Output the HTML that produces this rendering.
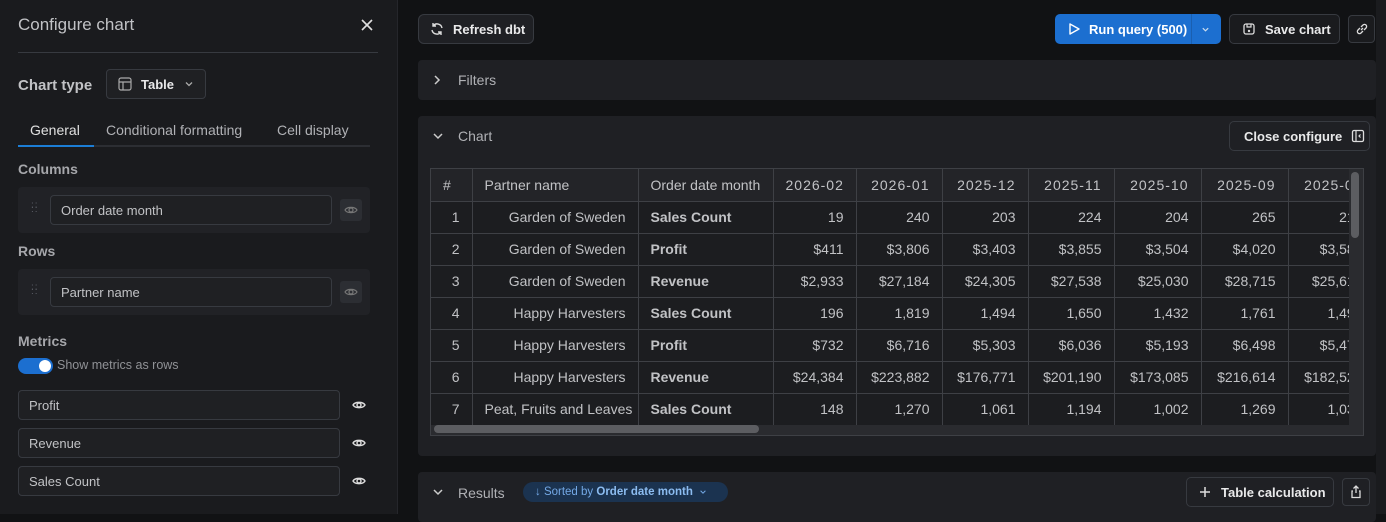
<!DOCTYPE html>
<html><head><meta charset="utf-8"><style>
*{box-sizing:border-box;margin:0;padding:0}
body{width:1386px;height:514px;overflow:hidden;background:#111214;font-family:"Liberation Sans",sans-serif;color:#c1c2c5;position:relative}
.a{position:absolute}
.lp{left:0;top:0;width:398px;height:514px;background:#1a1b1e;border-right:1px solid #25262b}
.lbl{font-size:14px;font-weight:bold;color:#a6a7ab}
.inp{background:#1f2023;border:1px solid #373a40;border-radius:4px;font-size:13px;color:#c1c2c5;padding-left:10px;display:flex;align-items:center}
.btn{border:1px solid #373a40;border-radius:4px;background:#1f2023;color:#e9e9ea;font-size:13px;font-weight:bold;display:flex;align-items:center}
.card{background:#1f2024;border-radius:4px}
table{border-collapse:collapse;font-size:14px;color:#c1c2c5}
td,th{border:1px solid #3e4045;height:32px;padding:0 12px;white-space:nowrap;overflow:hidden}
th{background:#232428;font-weight:normal;text-align:left;color:#c1c2c5}
td{background:#1c1d20;text-align:right}
th.d{text-align:right;letter-spacing:1px}
td.m{text-align:left;font-weight:bold}
svg{display:block}
</style></head><body>
<div class="a lp">
 <div class="a" style="left:18px;top:15px;font-size:17px;color:#c1c2c5">Configure chart</div>
 <svg class="a" style="left:360px;top:18px" width="14" height="14" viewBox="0 0 14 14"><path d="M2 2L12 12M12 2L2 12" stroke="#e0e0e0" stroke-width="1.6"/></svg>
 <div class="a" style="left:18px;top:52px;width:360px;height:1px;background:#373a40"></div>
 <div class="a" style="left:18px;top:77px;font-size:15px;color:#c1c2c5;font-weight:600">Chart type</div>
 <div class="a btn" style="left:106px;top:69px;width:100px;height:30px;background:#1f2023">
  <svg style="margin-left:11px" width="14" height="14" viewBox="0 0 14 14"><rect x="1" y="1" width="12" height="12" rx="2" fill="none" stroke="#aaa" stroke-width="1.2"/><path d="M1 5H13M5 5V13" stroke="#aaa" stroke-width="1.2"/></svg>
  <span style="margin-left:9px">Table</span>
  <svg style="margin-left:10px" width="10" height="10" viewBox="0 0 10 10"><path d="M2 3.5L5 6.5L8 3.5" fill="none" stroke="#aaa" stroke-width="1.3"/></svg>
 </div>
 <div class="a" style="left:30px;top:122px;font-size:14px;color:#e0e0e0">General</div>
 <div class="a" style="left:106px;top:122px;font-size:14px;color:#b0b1b5">Conditional formatting</div>
 <div class="a" style="left:277px;top:122px;font-size:14px;color:#b0b1b5">Cell display</div>
 <div class="a" style="left:18px;top:145px;width:352px;height:2px;background:#2c2e33"></div>
 <div class="a" style="left:18px;top:145px;width:76px;height:2px;background:#1c7ed6"></div>
 <div class="a lbl" style="left:18px;top:161px">Columns</div>
 <div class="a" style="left:18px;top:187px;width:352px;height:46px;background:#212226;border-radius:4px"></div>
 <div class="a" style="left:31px;top:204px;color:#5c5f66;font-size:10px;line-height:4px;letter-spacing:1px">::<br>::<br></div>
 <div class="a inp" style="left:50px;top:195px;width:282px;height:30px">Order date month</div>
 <div class="a" style="left:340px;top:199px;width:22px;height:22px;background:#2c2e33;border-radius:3px"></div>
 <svg class="a" style="left:344px;top:203px" width="14" height="14" viewBox="0 0 14 14"><path d="M1 7C3 3.5 11 3.5 13 7C11 10.5 3 10.5 1 7Z" fill="none" stroke="#777" stroke-width="1.2"/><circle cx="7" cy="7" r="2" fill="none" stroke="#777" stroke-width="1.2"/></svg>
 <div class="a lbl" style="left:18px;top:243px">Rows</div>
 <div class="a" style="left:18px;top:269px;width:352px;height:46px;background:#212226;border-radius:4px"></div>
 <div class="a" style="left:31px;top:286px;color:#5c5f66;font-size:10px;line-height:4px;letter-spacing:1px">::<br>::<br></div>
 <div class="a inp" style="left:50px;top:277px;width:282px;height:30px">Partner name</div>
 <div class="a" style="left:340px;top:281px;width:22px;height:22px;background:#2c2e33;border-radius:3px"></div>
 <svg class="a" style="left:344px;top:285px" width="14" height="14" viewBox="0 0 14 14"><path d="M1 7C3 3.5 11 3.5 13 7C11 10.5 3 10.5 1 7Z" fill="none" stroke="#777" stroke-width="1.2"/><circle cx="7" cy="7" r="2" fill="none" stroke="#777" stroke-width="1.2"/></svg>
 <div class="a lbl" style="left:18px;top:333px">Metrics</div>
 <div class="a" style="left:18px;top:358px;width:35px;height:16px;background:#1c6fd0;border-radius:8px"></div>
 <div class="a" style="left:39px;top:360px;width:12px;height:12px;background:#fff;border-radius:6px"></div>
 <div class="a" style="left:57px;top:358px;font-size:12.5px;color:#909296">Show metrics as rows</div>
 <div class="a inp" style="left:18px;top:390px;width:322px;height:30px">Profit</div>
 <div class="a inp" style="left:18px;top:428px;width:322px;height:30px">Revenue</div>
 <div class="a inp" style="left:18px;top:466px;width:322px;height:30px">Sales Count</div>
 <svg class="a" style="left:352px;top:398px" width="14" height="14" viewBox="0 0 14 14"><path d="M1 7C3 3.5 11 3.5 13 7C11 10.5 3 10.5 1 7Z" fill="none" stroke="#ddd" stroke-width="1.4"/><circle cx="7" cy="7" r="2" fill="none" stroke="#ddd" stroke-width="1.4"/></svg>
 <svg class="a" style="left:352px;top:436px" width="14" height="14" viewBox="0 0 14 14"><path d="M1 7C3 3.5 11 3.5 13 7C11 10.5 3 10.5 1 7Z" fill="none" stroke="#ddd" stroke-width="1.4"/><circle cx="7" cy="7" r="2" fill="none" stroke="#ddd" stroke-width="1.4"/></svg>
 <svg class="a" style="left:352px;top:474px" width="14" height="14" viewBox="0 0 14 14"><path d="M1 7C3 3.5 11 3.5 13 7C11 10.5 3 10.5 1 7Z" fill="none" stroke="#ddd" stroke-width="1.4"/><circle cx="7" cy="7" r="2" fill="none" stroke="#ddd" stroke-width="1.4"/></svg>
</div>

<div class="a btn" style="left:418px;top:14px;width:116px;height:30px;border-radius:6px;background:#1f2024">
 <svg style="margin-left:11px" width="14" height="14" viewBox="0 0 14 14"><path d="M12 6A5 5 0 0 0 3 4M2 8A5 5 0 0 0 11 10M3 1V4H6M11 13V10H8" fill="none" stroke="#ddd" stroke-width="1.4"/></svg>
 <span style="margin-left:9px">Refresh dbt</span>
</div>
<div class="a" style="left:1055px;top:14px;width:166px;height:30px;background:#1c6fd0;border-radius:5px;color:#fff;font-size:13px;font-weight:bold;display:flex;align-items:center">
 <svg style="margin-left:12px" width="14" height="14" viewBox="0 0 14 14"><path d="M3 2L12 7L3 12Z" fill="none" stroke="#fff" stroke-width="1.4" stroke-linejoin="round"/></svg>
 <span style="margin-left:8px">Run query (500)</span>
 <div style="position:absolute;left:136px;top:0;width:1px;height:30px;background:#1a5fb0"></div>
 <svg style="position:absolute;left:146px;top:11px" width="9" height="9" viewBox="0 0 10 10"><path d="M2 3.5L5 6.5L8 3.5" fill="none" stroke="#cde" stroke-width="1.3"/></svg>
</div>
<div class="a btn" style="left:1229px;top:14px;width:111px;height:30px;border-radius:5px;background:#1a1b1e">
 <svg style="margin-left:12px" width="14" height="14" viewBox="0 0 14 14"><rect x="2" y="2" width="10" height="10" rx="2" fill="none" stroke="#ddd" stroke-width="1.3"/><path d="M5 2V5H9V2" fill="none" stroke="#ddd" stroke-width="1.2"/><circle cx="7" cy="9" r="1.2" fill="#ddd"/></svg>
 <span style="margin-left:9px">Save chart</span>
</div>
<div class="a btn" style="left:1348px;top:15px;width:27px;height:28px;background:#1a1b1e;justify-content:center">
 <svg width="14" height="14" viewBox="0 0 14 14"><path d="M6 8L8 6M5 6L3 8A2 2 0 0 0 6 11L8 9M9 8L11 6A2 2 0 0 0 8 3L6 5" fill="none" stroke="#ddd" stroke-width="1.3"/></svg>
</div>
<div class="a" style="left:1376px;top:0;width:10px;height:514px;background:#1a1b1e"></div>

<div class="a card" style="left:418px;top:60px;width:958px;height:40px"></div>
<svg class="a" style="left:432px;top:74px" width="10" height="12" viewBox="0 0 10 12"><path d="M3 2L7 6L3 10" fill="none" stroke="#ccc" stroke-width="1.5"/></svg>
<div class="a" style="left:458px;top:72px;font-size:14px;color:#b0b1b5">Filters</div>

<div class="a card" style="left:418px;top:116px;width:958px;height:340px"></div>
<svg class="a" style="left:432px;top:131px" width="12" height="10" viewBox="0 0 12 10"><path d="M2 3L6 7L10 3" fill="none" stroke="#ccc" stroke-width="1.5"/></svg>
<div class="a" style="left:458px;top:128px;font-size:14px;color:#b0b1b5">Chart</div>
<div class="a btn" style="left:1229px;top:121px;width:141px;height:30px;border-radius:5px;background:#1f2024">
 <span style="margin-left:14px">Close configure</span>
 <svg style="margin-left:9px" width="14" height="14" viewBox="0 0 14 14"><rect x="1.5" y="1.5" width="11" height="11" rx="1.5" fill="none" stroke="#ddd" stroke-width="1.3"/><path d="M5 1.5V12.5M9.5 5.5L8 7L9.5 8.5" fill="none" stroke="#ddd" stroke-width="1.2"/></svg>
</div>
<div class="a" style="left:430px;top:168px;width:934px;height:268px;border:1px solid #3e4045;overflow:hidden;background:#2a2b2f">
 <div style="width:918px;height:256px;overflow:hidden">
 <table style="table-layout:fixed;width:944px">
  <colgroup><col style="width:41px"><col style="width:166px"><col style="width:135px"><col style="width:83px"><col style="width:86px"><col style="width:86px"><col style="width:86px"><col style="width:87px"><col style="width:87px"><col style="width:87px"></colgroup>
  <tr><th style="border-left:none;border-top:none">#</th><th style="border-top:none">Partner name</th><th style="border-top:none">Order date month</th><th class="d" style="border-top:none">2026-02</th><th class="d" style="border-top:none">2026-01</th><th class="d" style="border-top:none">2025-12</th><th class="d" style="border-top:none">2025-11</th><th class="d" style="border-top:none">2025-10</th><th class="d" style="border-top:none">2025-09</th><th class="d" style="border-top:none">2025-08</th></tr>
  <tr><td style="border-left:none">1</td><td>Garden of Sweden</td><td class="m">Sales Count</td><td>19</td><td>240</td><td>203</td><td>224</td><td>204</td><td>265</td><td>213</td></tr>
  <tr><td style="border-left:none">2</td><td>Garden of Sweden</td><td class="m">Profit</td><td>$411</td><td>$3,806</td><td>$3,403</td><td>$3,855</td><td>$3,504</td><td>$4,020</td><td>$3,585</td></tr>
  <tr><td style="border-left:none">3</td><td>Garden of Sweden</td><td class="m">Revenue</td><td>$2,933</td><td>$27,184</td><td>$24,305</td><td>$27,538</td><td>$25,030</td><td>$28,715</td><td>$25,610</td></tr>
  <tr><td style="border-left:none">4</td><td>Happy Harvesters</td><td class="m">Sales Count</td><td>196</td><td>1,819</td><td>1,494</td><td>1,650</td><td>1,432</td><td>1,761</td><td>1,491</td></tr>
  <tr><td style="border-left:none">5</td><td>Happy Harvesters</td><td class="m">Profit</td><td>$732</td><td>$6,716</td><td>$5,303</td><td>$6,036</td><td>$5,193</td><td>$6,498</td><td>$5,470</td></tr>
  <tr><td style="border-left:none">6</td><td>Happy Harvesters</td><td class="m">Revenue</td><td>$24,384</td><td>$223,882</td><td>$176,771</td><td>$201,190</td><td>$173,085</td><td>$216,614</td><td>$182,520</td></tr>
  <tr><td style="border-left:none">7</td><td>Peat, Fruits and Leaves</td><td class="m">Sales Count</td><td>148</td><td>1,270</td><td>1,061</td><td>1,194</td><td>1,002</td><td>1,269</td><td>1,030</td></tr>
 </table>
 </div>
 <div class="a" style="left:3px;top:256px;width:325px;height:8px;background:#5c5d61;border-radius:4px"></div>
 <div class="a" style="left:920px;top:3px;width:8px;height:66px;background:#5c5d61;border-radius:4px"></div>
</div>

<div class="a card" style="left:418px;top:472px;width:958px;height:50px"></div>
<svg class="a" style="left:432px;top:487px" width="12" height="10" viewBox="0 0 12 10"><path d="M2 3L6 7L10 3" fill="none" stroke="#ccc" stroke-width="1.5"/></svg>
<div class="a" style="left:458px;top:485px;font-size:14px;color:#b0b1b5">Results</div>
<div class="a" style="left:523px;top:482px;width:205px;height:20px;background:#1b3350;border-radius:10px;font-size:11.5px;color:#74a9e6;display:flex;align-items:center">
 <span style="margin-left:12px">&#8595; Sorted by <b style="color:#8cbcf0">Order date month</b></span>
 <svg style="margin-left:6px" width="8" height="8" viewBox="0 0 10 10"><path d="M2 3.5L5 6.5L8 3.5" fill="none" stroke="#74a9e6" stroke-width="1.3"/></svg>
</div>
<div class="a btn" style="left:1186px;top:477px;width:148px;height:30px;border-radius:5px;background:#1f2024">
 <svg style="margin-left:12px" width="12" height="12" viewBox="0 0 12 12"><path d="M6 1V11M1 6H11" stroke="#ddd" stroke-width="1.5"/></svg>
 <span style="margin-left:10px">Table calculation</span>
</div>
<div class="a btn" style="left:1342px;top:478px;width:28px;height:28px;background:#1f2024;justify-content:center">
 <svg width="14" height="14" viewBox="0 0 14 14"><path d="M7 1V8M4.5 3.5L7 1L9.5 3.5M4 6H3V12.5H11V6H10" fill="none" stroke="#ddd" stroke-width="1.3"/></svg>
</div>
</body></html>
